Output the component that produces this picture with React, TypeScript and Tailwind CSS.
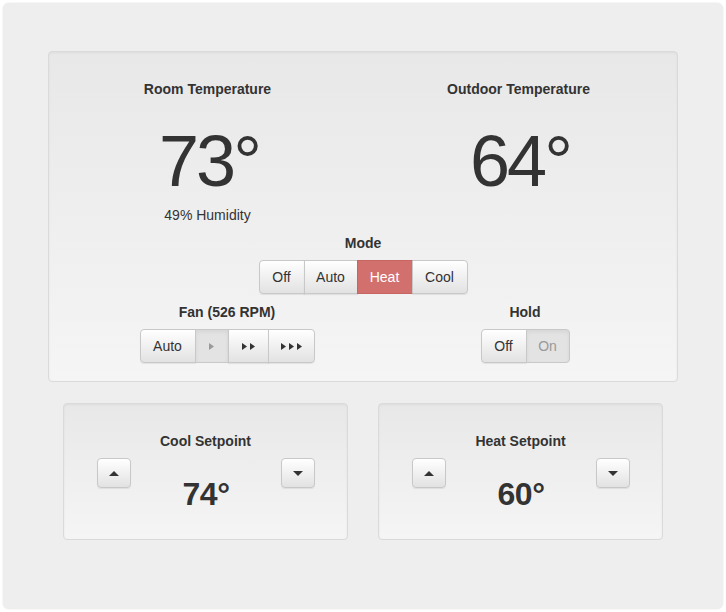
import React from 'react';

type Tone = 'default' | 'danger' | 'pressed';

const toneClass: Record<Tone, string> = {
  default:
    'bg-linear-to-b from-white to-[#e2e2e2] text-[#333] shadow-[inset_0_1px_0_rgba(255,255,255,0.15),0_1px_1px_rgba(0,0,0,0.075)]',
  danger: 'bg-[#d2706e] text-white border-[#c76563]',
  pressed: 'bg-[#e3e3e3] text-[#999] shadow-[inset_0_2px_4px_rgba(0,0,0,0.06)]',
};

const GroupButton = ({
  width,
  tone = 'default',
  children,
}: {
  width: string;
  tone?: Tone;
  children: React.ReactNode;
}) => (
  <button
    className={`${width} h-[34px] -ml-px first:ml-0 flex items-center justify-center border border-[#c8c8c8] text-[14px] first:rounded-l-[4px] last:rounded-r-[4px] ${toneClass[tone]}`}
  >
    {children}
  </button>
);

// small play arrows used for fan speeds
const Arrows = ({ count, color }: { count: number; color: string }) => (
  <span className="flex items-center gap-[3px]">
    {Array.from({ length: count }).map((_, i) => (
      <svg key={i} width="5" height="7" viewBox="0 0 5 7">
        <path d="M0 0 L5 3.5 L0 7 Z" fill={color} />
      </svg>
    ))}
  </span>
);

const Label = ({ children }: { children: React.ReactNode }) => (
  <div className="h-5 leading-5 text-[14px] font-bold text-[#333] text-center">{children}</div>
);

const Caret = ({ up }: { up?: boolean }) => (
  <svg width="10" height="5" viewBox="0 0 10 5">
    <path d={up ? 'M0 5 L5 0 L10 5 Z' : 'M0 0 L10 0 L5 5 Z'} fill="#333" />
  </svg>
);

const StepButton = ({ up }: { up?: boolean }) => (
  <button className="w-[34px] h-[30px] flex items-center justify-center rounded-[4px] border border-[#c8c8c8] bg-linear-to-b from-white to-[#e2e2e2] shadow-[0_1px_1px_rgba(0,0,0,0.075)]">
    <Caret up={up} />
  </button>
);

const wellClass =
  'border border-[#dadada] rounded-[4px] bg-linear-to-b from-[#e8e8e8] to-[#f5f5f5] shadow-[inset_0_1px_3px_rgba(0,0,0,0.05)]';

const Setpoint = ({ title, value }: { title: string; value: number }) => (
  <div className={`${wellClass} pt-[27px] pb-[29px]`}>
    <Label>{title}</Label>
    <div className="mt-[7px] flex items-start justify-between pl-[33px] pr-[32px]">
      <StepButton up />
      <div className="mt-[20px] text-[32px] leading-none font-bold tracking-[-0.5px] text-[#333]">{value}°</div>
      <StepButton />
    </div>
  </div>
);

const BigTemp = ({ value }: { value: number }) => (
  <div className="mt-[26px] h-[72px] pl-[3px] text-[72px] leading-none tracking-[-3px] text-[#333]">
    {value}°
  </div>
);

export default function App() {
  return (
    <div
      className="min-h-screen bg-white p-[3px]"
      style={{ fontFamily: '"Liberation Sans", Arial, sans-serif' }}
    >
      <div className="w-[720px] h-[606px] rounded-[6px] bg-[#eeeeee] shadow-[0_0_2px_rgba(0,0,0,0.12)] pt-[48px] px-[45px]">
        {/* main thermostat panel */}
        <div className={`${wellClass} pt-[27px] pb-[18px]`}>
          <div className="grid grid-cols-2 mx-[3px]">
            <div className="flex flex-col items-center">
              <Label>Room Temperature</Label>
              <BigTemp value={73} />
              <div className="mt-[8px] h-5 leading-5 text-[14px] text-[#333]">49% Humidity</div>
            </div>
            <div className="flex flex-col items-center">
              <Label>Outdoor Temperature</Label>
              <BigTemp value={64} />
            </div>
          </div>

          <div className="mt-[8px]">
            <Label>Mode</Label>
            <div className="mt-[7px] flex justify-center">
              <GroupButton width="w-[46px]">Off</GroupButton>
              <GroupButton width="w-[54px]">Auto</GroupButton>
              <GroupButton width="w-[56px]" tone="danger">Heat</GroupButton>
              <GroupButton width="w-[56px]">Cool</GroupButton>
            </div>
          </div>

          <div className="mt-[8px] mx-[3px] grid grid-cols-[350px_246px]">
            <div className="flex flex-col items-center">
              <Label>Fan (526 RPM)</Label>
              <div className="mt-[7px] flex">
                <GroupButton width="w-[56px]">Auto</GroupButton>
                <GroupButton width="w-[34px]" tone="pressed">
                  <Arrows count={1} color="#9a9a9a" />
                </GroupButton>
                <GroupButton width="w-[41px]">
                  <Arrows count={2} color="#333" />
                </GroupButton>
                <GroupButton width="w-[47px]">
                  <Arrows count={3} color="#333" />
                </GroupButton>
              </div>
            </div>
            <div className="flex flex-col items-center">
              <Label>Hold</Label>
              <div className="mt-[7px] flex">
                <GroupButton width="w-[46px]">Off</GroupButton>
                <GroupButton width="w-[44px]" tone="pressed">On</GroupButton>
              </div>
            </div>
          </div>
        </div>

        {/* setpoints */}
        <div className="mt-[21px] grid grid-cols-2">
          <div className="px-[15px]">
            <Setpoint title="Cool Setpoint" value={74} />
          </div>
          <div className="px-[15px]">
            <Setpoint title="Heat Setpoint" value={60} />
          </div>
        </div>
      </div>
    </div>
  );
}
